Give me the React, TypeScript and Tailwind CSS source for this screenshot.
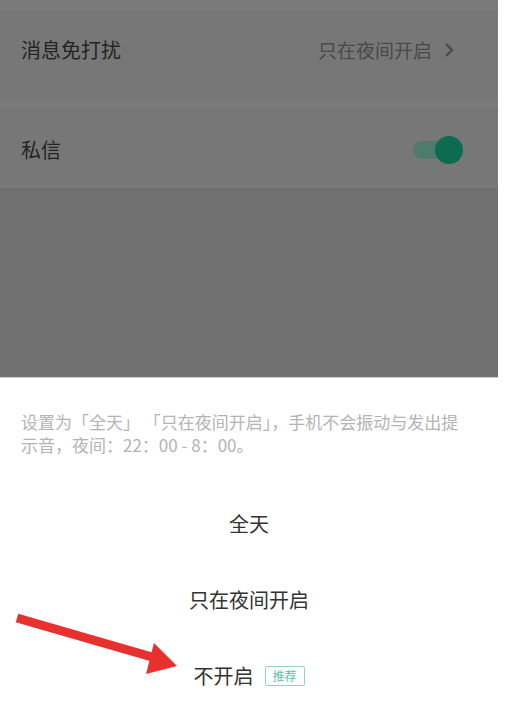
import React from 'react'

const FONT = { fontFamily: '"Noto Sans CJK SC", "Noto Sans", sans-serif' }

function Toggle() {
  return (
    <div className="relative w-[52px] h-[30px] flex items-center">
      <div className="w-[40px] h-[18px] rounded-full bg-[#4f7b6d] ml-[2px]" />
      <div className="absolute right-0 top-[1px] w-[28px] h-[28px] rounded-full bg-[#0d6b52]" />
    </div>
  )
}

function Arrow() {
  return (
    <svg className="absolute left-0 top-[610px]" width="190" height="80" viewBox="0 0 190 80">
      <path d="M17 8 L152 47" stroke="#e8312e" strokeWidth="9" strokeLinecap="butt" />
      <polygon points="154,33 177,56 146,64" fill="#e8312e" />
    </svg>
  )
}

export default function App() {
  return (
    <div className="relative w-[518px] h-[714px] bg-white overflow-hidden" style={FONT}>
      <div className="w-[498px] h-[377px] bg-[#707170] flex flex-col">
        <div className="h-[10px] bg-[#7a7a7a]" />
        <div className="h-[85px] bg-[#777777] flex items-center justify-between px-[21px] pb-[5px]">
          <span className="text-[20px] text-[#242424]">消息免打扰</span>
          <span className="flex items-center gap-[11px] text-[19px] text-[#4a4a4a] mr-[22px]">
            只在夜间开启
            <svg width="12" height="16" viewBox="0 0 12 16">
              <path d="M3 2 L9 8 L3 14" stroke="#4a4a4a" strokeWidth="2.4" fill="none" />
            </svg>
          </span>
        </div>
        <div className="h-[13px] bg-gradient-to-b from-[#777777] to-[#7c7c7c]" />
        <div className="h-[77px] bg-[#777777] flex items-center justify-between px-[21px] pt-[6px]">
          <span className="text-[20px] text-[#242424]">私信</span>
          <div className="mr-[14px]">
            <Toggle />
          </div>
        </div>
        <div className="h-[3px] bg-[#7a7a7a]" />
      </div>
      <div className="w-[498px] h-px bg-[#cfcfcf]" />
      <div className="w-[498px] flex flex-col">
        <p className="px-[21px] pt-[32px] text-[17px] leading-[23px] text-[#b4b4b4]">
          设置为「全天」 「只在夜间开启」，手机不会振动与发出提
          <br />
          示音，夜间：22：00 - 8：00。
        </p>
        <div className="mt-[30px] flex flex-col">
          <div className="h-[76px] flex items-center justify-center text-[20px] text-[#333333]">全天</div>
          <div className="h-[76px] flex items-center justify-center text-[20px] text-[#333333]">只在夜间开启</div>
          <div className="h-[76px] flex items-center justify-center gap-[11px] text-[20px] text-[#333333]">
            不开启
            <span className="w-[40px] h-[20px] border-[1.5px] border-[#8fd3c6] rounded-[2px] flex items-center justify-center text-[12px] leading-none text-[#5fbfae]">
              推荐
            </span>
          </div>
        </div>
      </div>
      <Arrow />
    </div>
  )
}
